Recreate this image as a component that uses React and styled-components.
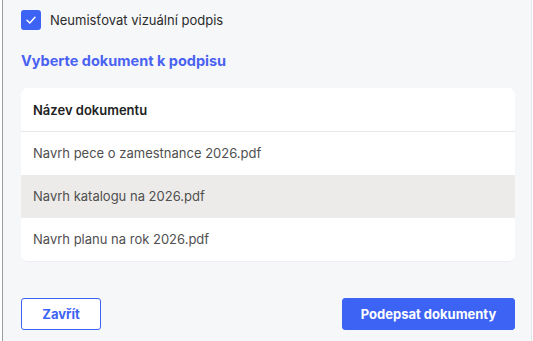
import React from "react";
import styled, { createGlobalStyle } from "styled-components";

const Global = createGlobalStyle`
  html, body { margin: 0; padding: 0; background: #ffffff; }
  body { font-family: Inter, "Noto Sans", sans-serif; }
`;

const Dialog = styled.div`
  box-sizing: border-box;
  margin-left: 2px;
  width: 530px;
  height: 341px;
  background: #f6f7f9;
  border-left: 1px solid #9c9c9c;
  border-right: 1px solid #e4e6ea;
  padding: 10px 16px 0 18px;
  display: flex;
  flex-direction: column;
`;

const CheckRow = styled.label`
  display: flex;
  align-items: center;
  gap: 9px;
  height: 20px;
  font-size: 13px;
  color: #2b2b2b;
`;

const Box = styled.span`
  width: 20px;
  height: 20px;
  border-radius: 3px;
  background: #3d63f5;
  display: flex;
  align-items: center;
  justify-content: center;
`;

const Heading = styled.h2`
  margin: 22px 0 0;
  font-size: 14.5px;
  font-weight: 700;
  line-height: 18px;
  color: #4a62f2;
`;

const Card = styled.div`
  margin-top: 18px;
  background: #ffffff;
  border-radius: 7px;
  overflow: hidden;
  border-bottom: 1px solid #eceef1;
`;

const Row = styled.div`
  display: flex;
  align-items: center;
  height: ${(p) => (p.$head ? 44 : 43)}px;
  box-sizing: border-box;
  padding: 0 0 ${(p) => (p.$head ? 0 : 2)}px 12px;
  font-size: 13px;
  font-weight: ${(p) => (p.$head ? 600 : 400)};
  color: ${(p) => (p.$head ? "#222" : "#4f4f4f")};
  background: ${(p) => (p.$active ? "#ecebe9" : "#ffffff")};
  border-bottom: ${(p) => (p.$head ? "1px solid #e6e7ea" : "none")};
`;

const Footer = styled.div`
  margin-top: 36px;
  display: flex;
  justify-content: space-between;
`;

const Button = styled.button`
  box-sizing: border-box;
  height: 32px;
  width: ${(p) => p.$w}px;
  border-radius: 3px;
  font-family: Inter, "Noto Sans", sans-serif;
  font-size: 13px;
  font-weight: 700;
  border: 1px solid #3d63f5;
  background: ${(p) => (p.$primary ? "#3d63f5" : "#ffffff")};
  color: ${(p) => (p.$primary ? "#ffffff" : "#3d63f5")};
  cursor: pointer;
`;

export default function App() {
  return (
    <>
      <Global />
      <Dialog>
        <CheckRow>
          <Box>
            <svg width="12" height="12" viewBox="0 0 12 12">
              <path d="M2 6.3 L4.8 9 L10 3.2" fill="none" stroke="#fff" strokeWidth="1.5" strokeLinecap="round" strokeLinejoin="round" />
            </svg>
          </Box>
          Neumisťovat vizuální podpis
        </CheckRow>
        <Heading>Vyberte dokument k podpisu</Heading>
        <Card>
          <Row $head>Název dokumentu</Row>
          <Row>Navrh pece o zamestnance 2026.pdf</Row>
          <Row $active>Navrh katalogu na 2026.pdf</Row>
          <Row>Navrh planu na rok 2026.pdf</Row>
        </Card>
        <Footer>
          <Button $w={80}>Zavřít</Button>
          <Button $primary $w={173}>Podepsat dokumenty</Button>
        </Footer>
      </Dialog>
    </>
  );
}
